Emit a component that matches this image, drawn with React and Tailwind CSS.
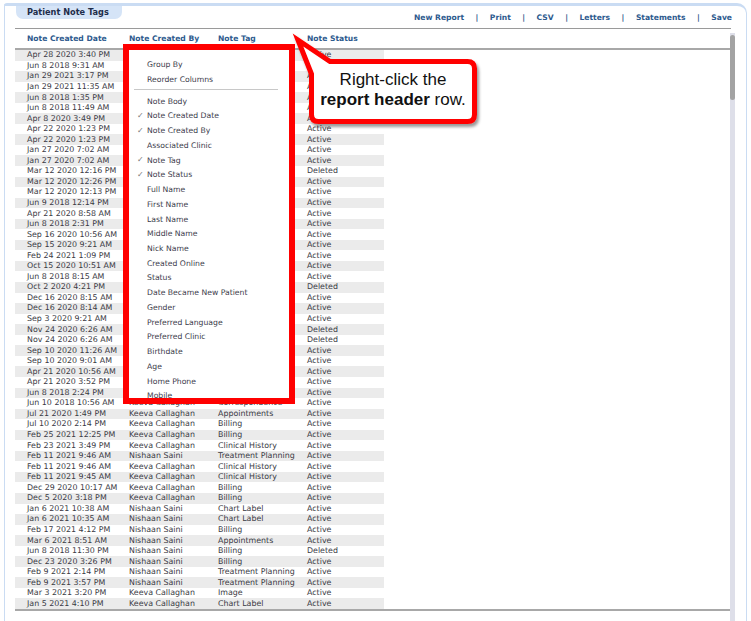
const HIDDEN = ["", ""];

const rows = [
  ["Apr 28 2020 3:40 PM", ...HIDDEN, "Active"],
  ["Jun 8 2018 9:31 AM", ...HIDDEN, "Active"],
  ["Jan 29 2021 3:17 PM", ...HIDDEN, "Active"],
  ["Jan 29 2021 11:35 AM", ...HIDDEN, "Active"],
  ["Jun 8 2018 1:35 PM", ...HIDDEN, "Active"],
  ["Jun 8 2018 11:49 AM", ...HIDDEN, "Active"],
  ["Apr 8 2020 3:49 PM", ...HIDDEN, "Active"],
  ["Apr 22 2020 1:23 PM", ...HIDDEN, "Active"],
  ["Apr 22 2020 1:23 PM", ...HIDDEN, "Active"],
  ["Jan 27 2020 7:02 AM", ...HIDDEN, "Active"],
  ["Jan 27 2020 7:02 AM", ...HIDDEN, "Active"],
  ["Mar 12 2020 12:16 PM", ...HIDDEN, "Deleted"],
  ["Mar 12 2020 12:26 PM", ...HIDDEN, "Active"],
  ["Mar 12 2020 12:13 PM", ...HIDDEN, "Active"],
  ["Jun 9 2018 12:14 PM", ...HIDDEN, "Active"],
  ["Apr 21 2020 8:58 AM", ...HIDDEN, "Active"],
  ["Jun 8 2018 2:31 PM", ...HIDDEN, "Active"],
  ["Sep 16 2020 10:56 AM", ...HIDDEN, "Active"],
  ["Sep 15 2020 9:21 AM", ...HIDDEN, "Active"],
  ["Feb 24 2021 1:09 PM", ...HIDDEN, "Active"],
  ["Oct 15 2020 10:51 AM", ...HIDDEN, "Active"],
  ["Jun 8 2018 8:15 AM", ...HIDDEN, "Active"],
  ["Oct 2 2020 4:21 PM", ...HIDDEN, "Deleted"],
  ["Dec 16 2020 8:15 AM", ...HIDDEN, "Active"],
  ["Dec 16 2020 8:14 AM", ...HIDDEN, "Active"],
  ["Sep 3 2020 9:21 AM", ...HIDDEN, "Active"],
  ["Nov 24 2020 6:26 AM", ...HIDDEN, "Deleted"],
  ["Nov 24 2020 6:26 AM", ...HIDDEN, "Deleted"],
  ["Sep 10 2020 11:26 AM", ...HIDDEN, "Active"],
  ["Sep 10 2020 9:01 AM", ...HIDDEN, "Active"],
  ["Apr 21 2020 10:56 AM", ...HIDDEN, "Active"],
  ["Apr 21 2020 3:52 PM", ...HIDDEN, "Active"],
  ["Jun 8 2018 2:24 PM", ...HIDDEN, "Active"],
  ["Jun 10 2018 10:56 AM", "Keeva Callaghan", "Correspondence", "Active"],
  ["Jul 21 2020 1:49 PM", "Keeva Callaghan", "Appointments", "Active"],
  ["Jul 10 2020 2:14 PM", "Keeva Callaghan", "Billing", "Active"],
  ["Feb 25 2021 12:25 PM", "Keeva Callaghan", "Billing", "Active"],
  ["Feb 23 2021 3:49 PM", "Keeva Callaghan", "Clinical History", "Active"],
  ["Feb 11 2021 9:46 AM", "Nishaan Saini", "Treatment Planning", "Active"],
  ["Feb 11 2021 9:46 AM", "Keeva Callaghan", "Clinical History", "Active"],
  ["Feb 11 2021 9:45 AM", "Keeva Callaghan", "Clinical History", "Active"],
  ["Dec 29 2020 10:17 AM", "Keeva Callaghan", "Billing", "Active"],
  ["Dec 5 2020 3:18 PM", "Keeva Callaghan", "Billing", "Active"],
  ["Jan 6 2021 10:38 AM", "Nishaan Saini", "Chart Label", "Active"],
  ["Jan 6 2021 10:35 AM", "Nishaan Saini", "Chart Label", "Active"],
  ["Feb 17 2021 4:12 PM", "Nishaan Saini", "Billing", "Active"],
  ["Mar 6 2021 8:51 AM", "Nishaan Saini", "Appointments", "Active"],
  ["Jun 8 2018 11:30 PM", "Nishaan Saini", "Billing", "Deleted"],
  ["Dec 23 2020 3:26 PM", "Nishaan Saini", "Billing", "Active"],
  ["Feb 9 2021 2:14 PM", "Nishaan Saini", "Treatment Planning", "Active"],
  ["Feb 9 2021 3:57 PM", "Nishaan Saini", "Treatment Planning", "Active"],
  ["Mar 3 2021 3:20 PM", "Keeva Callaghan", "Image", "Active"],
  ["Jan 5 2021 4:10 PM", "Keeva Callaghan", "Chart Label", "Active"],
];

const links = ["New Report", "Print", "CSV", "Letters", "Statements", "Save"];

// [label, checked]
const columnItems = [
  ["Note Body", false],
  ["Note Created Date", true],
  ["Note Created By", true],
  ["Associated Clinic", false],
  ["Note Tag", true],
  ["Note Status", true],
  ["Full Name", false],
  ["First Name", false],
  ["Last Name", false],
  ["Middle Name", false],
  ["Nick Name", false],
  ["Created Online", false],
  ["Status", false],
  ["Date Became New Patient", false],
  ["Gender", false],
  ["Preferred Language", false],
  ["Preferred Clinic", false],
  ["Birthdate", false],
  ["Age", false],
  ["Home Phone", false],
  ["Mobile", false],
];

function MenuItem({ label, checked }) {
  return (
    <div className="flex h-[14.74px] items-center">
      <span className="w-[18px] pl-[8px] text-[8px] text-[#777]">
        {checked ? "✓" : ""}
      </span>
      <span>{label}</span>
    </div>
  );
}

function ContextMenu() {
  return (
    <div className="absolute left-[123px] top-[44px] h-[360px] w-[172px] overflow-hidden border-[6px] border-[#ff0000] bg-white pt-[7.6px] text-[7.7px] text-[#3b3b4b]">
      <MenuItem label="Group By" />
      <MenuItem label="Reorder Columns" />
      <div className="mb-[3.6px] ml-[5px] mt-[2.4px] h-px w-[144px] bg-[#c8c8c8]" />
      {columnItems.map(([label, checked]) => (
        <MenuItem key={label} label={label} checked={checked} />
      ))}
    </div>
  );
}

function Callout() {
  return (
    <>
      <svg
        className="absolute left-[285px] top-[28px]"
        width="200"
        height="105"
        viewBox="0 0 200 105"
      >
        <defs>
          <filter id="sh" x="-10%" y="-10%" width="130%" height="140%">
            <feDropShadow dx="2" dy="3" stdDeviation="1.6" floodColor="#000" floodOpacity="0.4" />
          </filter>
        </defs>
        <path
          d="M13 12 L45 33.5 H182.5 Q189.5 33.5 189.5 40.5 V86.5 Q189.5 93.5 182.5 93.5 H33.5 Q26.5 93.5 26.5 86.5 V46 Z"
          fill="#fff"
          stroke="#ff0000"
          strokeWidth="5"
          strokeLinejoin="miter"
          strokeMiterlimit="10"
          filter="url(#sh)"
        />
      </svg>
      <div className="absolute left-[311px] top-[70px] w-[164px] text-center font-['Liberation_Sans',Arial,sans-serif] text-[17px] leading-[20px] text-[#111]">
        <div>Right-click the</div>
        <div>
          <span className="font-bold">report header</span> row.
        </div>
      </div>
    </>
  );
}

export default function App() {
  return (
    <div className="relative h-[621px] w-[751px] overflow-hidden bg-white pl-[4px] pt-[3px] font-['DejaVu_Sans',Verdana,sans-serif]">
      <div className="h-[618px] w-[743px] rounded-tl-[3px] rounded-tr-[10px] border-x border-t-[3px] border-[#cadcf3]">
        <div className="flex h-[22px] items-start justify-between pl-[11px] pr-[14px]">
          <div className="flex h-[13px] w-[106px] items-center rounded-b-[7px] bg-[#d5e4f7] pl-[11px] text-[8.2px] font-bold text-[#1e2d4a]">
            Patient Note Tags
          </div>
          <div className="mt-[7px] flex items-center gap-[11.5px] text-[7.6px] font-bold leading-[10px] text-[#2d5a8e]">
            {links.map((l, i) => (
              <div key={l} className="flex items-center gap-[11.5px]">
                {i > 0 && <span>|</span>}
                <span>{l}</span>
              </div>
            ))}
          </div>
        </div>
        <div className="ml-[10px] h-px w-[716px] bg-[#9a9a9a]" />

        <div className="ml-[10px] mt-[4px] flex h-[600px] w-[720px]">
          <div className="w-[715px]">
            <div className="flex h-[15px] items-center pb-[3px] text-[7.6px] font-bold text-[#2d5a8e]">
              <div className="w-[114px] pl-[12px]">Note Created Date</div>
              <div className="w-[89px]">Note Created By</div>
              <div className="w-[89px]">Note Tag</div>
              <div className="w-[77px]">Note Status</div>
            </div>
            <div className="h-[2px] bg-[#a8a8a8]" />
            <div className="text-[7.9px] text-[#3a3a44]">
              {rows.map((r, i) => (
                <div
                  key={i}
                  className={`flex h-[10.56px] w-[369px] items-center whitespace-nowrap ${
                    i % 2 === 0 ? "bg-[#ebebeb]" : "bg-white"
                  }`}
                >
                  <div className="w-[114px] pl-[12px]">{r[0]}</div>
                  <div className="w-[89px]">{r[1]}</div>
                  <div className="w-[89px]">{r[2]}</div>
                  <div className="w-[77px]">{r[3]}</div>
                </div>
              ))}
            </div>
            <div className="h-[2px] bg-[#a8a8a8]" />
          </div>
          <div className="w-[5px] bg-[#dedfe9]">
            <div className="mt-[2px] h-[65px] rounded-full bg-[#a3a3a3]" />
          </div>
        </div>
      </div>

      <ContextMenu />
      <Callout />
    </div>
  );
}
